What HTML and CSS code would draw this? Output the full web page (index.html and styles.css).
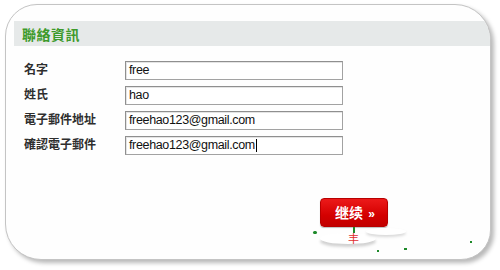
FILE: index.html
```html
<!DOCTYPE html>
<html>
<head>
<meta charset="utf-8">
<link rel="stylesheet" href="styles.css">
</head>
<body>
<div class="card">
  <div class="header"><h2 class="title">聯絡資訊</h2></div>
  <div class="form">
    <div class="label">名字</div><div class="field">free</div>
    <div class="label">姓氏</div><div class="field">hao</div>
    <div class="label">電子郵件地址</div><div class="field">freehao123@gmail.com</div>
    <div class="label">確認電子郵件</div><div class="field">freehao123@gmail.com<span class="caret"></span></div>
  </div>
  <div class="actions">
    <div class="btn-wrap">
      <button class="btn">继续 <span class="raquo">»</span></button>
      <span class="blob blob1"></span>
      <span class="blob blob2"></span>
      <span class="stem"></span>
      <span class="glyph">丰</span>
      <span class="speck s1"></span>
      <span class="speck s2"></span>
      <span class="speck s3"></span>
      <span class="speck s4"></span>
    </div>
  </div>
</div>
</body>
</html>
```
FILE: styles.css
```css
html, body {
  margin: 0;
  padding: 0;
  background: #ffffff;
}
body {
  width: 500px;
  height: 270px;
  overflow: hidden;
  font-family: "Liberation Sans", Arial, sans-serif;
}
.card {
  box-sizing: border-box;
  margin: 4px 0 0 5px;
  width: 486px;
  height: 256px;
  border: 1px solid #c4c4c4;
  border-radius: 32px 36px 30px 36px;
  background: #fefefe;
  box-shadow: 3px 3px 4px rgba(0, 0, 0, 0.28);
  overflow: hidden;
  display: flex;
  flex-direction: column;
}
.header {
  margin: 16px 0 0 8px;
  height: 25px;
  background: #e6e9e9;
  padding-left: 8px;
  display: flex;
  align-items: center;
}
.title {
  margin: 0;
  font-family: "Noto Sans CJK TC", "Noto Sans CJK SC", sans-serif;
  font-size: 14px;
  font-weight: bold;
  color: #3d9a2b;
  letter-spacing: 0.5px;
}
.form {
  margin-top: 15px;
  padding-left: 18px;
  display: grid;
  grid-template-columns: 101px 218px;
  grid-auto-rows: 19px;
  row-gap: 6px;
}
.label {
  font-family: "Noto Sans CJK TC", "Noto Sans CJK SC", sans-serif;
  font-size: 12px;
  font-weight: bold;
  color: #2e2e2e;
  line-height: 16px;
}
.field {
  box-sizing: border-box;
  height: 19px;
  border: 1px solid #a2a2a2;
  border-top-color: #8f8f8f;
  border-left-color: #8f8f8f;
  box-shadow: inset 1px 1px 0 #e4e4e4;
  background: #ffffff;
  padding-left: 3px;
  font-size: 12.5px;
  letter-spacing: -0.35px;
  line-height: 17px;
  color: #111111;
  white-space: nowrap;
  display: flex;
  align-items: center;
}
.caret {
  display: inline-block;
  width: 1px;
  height: 13px;
  background: #000;
  margin-left: 1px;
}
.actions {
  margin-top: 43px;
  padding-left: 314px;
}
.btn-wrap {
  position: relative;
  width: 68px;
  height: 29px;
}
.btn {
  box-sizing: border-box;
  width: 68px;
  height: 29px;
  border: 1px solid #b80000;
  border-radius: 4px;
  background: linear-gradient(#ec1a1a, #d40000 60%, #c20000);
  box-shadow: 0 1px 1px rgba(0,0,0,0.25);
  color: #ffffff;
  font-family: "Noto Sans CJK SC", "Noto Sans CJK TC", sans-serif;
  font-size: 14px;
  font-weight: bold;
  padding: 0 0 0 2px;
  line-height: 27px;
  cursor: pointer;
}
.raquo {
  font-family: "Liberation Sans", sans-serif;
  font-size: 12px;
  margin-left: 2px;
}
.blob {
  position: absolute;
  background: #ffffff;
  border-radius: 50%;
}
.blob1 {
  left: 0;
  top: 35px;
  width: 56px;
  height: 11px;
  box-shadow: 0 3px 3px rgba(0,0,0,0.18);
}
.blob2 {
  left: 46px;
  top: 30px;
  width: 40px;
  height: 7px;
  box-shadow: 0 2px 3px rgba(0,0,0,0.15);
}
.stem {
  position: absolute;
  left: 33px;
  top: 29px;
  width: 2px;
  height: 6px;
  background: #1e8a2a;
}
.glyph {
  position: absolute;
  left: 28px;
  top: 35px;
  font-family: "Noto Sans CJK SC", sans-serif;
  font-size: 11px;
  line-height: 11px;
  color: #e03030;
}
.speck {
  position: absolute;
  height: 2px;
  background: #1e8a2a;
}
.s1 { left: -7px; top: 33px; width: 4px; height: 3px; border-radius: 2px; }
.s2 { left: 150px; top: 43px; width: 2px; }
.s3 { left: 84px; top: 50px; width: 3px; }
.s4 { left: 57px; top: 52px; width: 2px; }
```
